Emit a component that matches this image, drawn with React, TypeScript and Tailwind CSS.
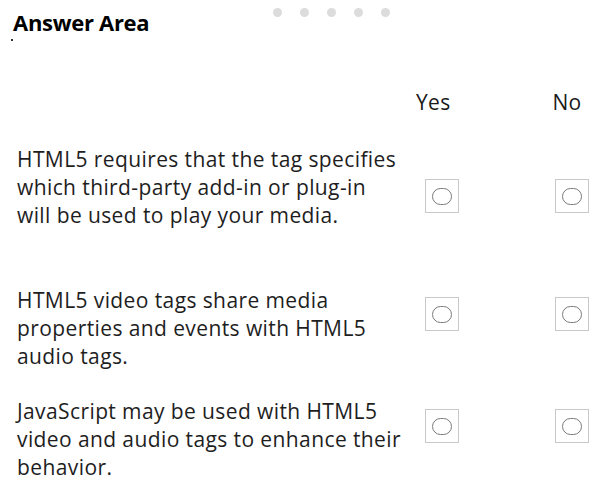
const rows = [
  {
    lines: [
      "HTML5 requires that the tag specifies",
      "which third-party add-in or plug-in",
      "will be used to play your media.",
    ],
    top: "mt-[29px]",
    box: "mt-[34px]",
  },
  {
    lines: [
      "HTML5 video tags share media",
      "properties and events with HTML5",
      "audio tags.",
    ],
    top: "mt-[57px]",
    box: "mt-[11px]",
  },
  {
    lines: [
      "JavaScript may be used with HTML5",
      "video and audio tags to enhance their",
      "behavior.",
    ],
    top: "mt-[27px]",
    box: "mt-[12px]",
  },
];

function RadioBox() {
  return (
    <div className="w-[34px] h-[34px] border border-[#c9c9c9] bg-white flex items-center justify-center">
      <div className="w-[20px] h-[17px] rounded-full border-[1.5px] border-[#7a7a7a]" />
    </div>
  );
}

export default function App() {
  return (
    <div className="w-[603px] h-[501px] bg-white text-[#1a1a1a] font-['Open_Sans',sans-serif] overflow-hidden">
      {/* Header */}
      <div className="flex items-start pt-[7px]">
        <h1 className="w-[273px] pl-[13px] mt-[1px] text-[22px] leading-[28px] font-bold text-black tracking-[-0.3px]">
          Answer Area
        </h1>
        <div className="mt-[1px] flex gap-[18px]">
          {[0, 1, 2, 3, 4].map((i) => (
            <div key={i} className="w-[9px] h-[9px] rounded-full bg-[#dcdcdc]" />
          ))}
        </div>
      </div>
      <div className="ml-[11px] mt-[3px] w-[2px] h-[2px] bg-[#333]" />

      {/* Yes / No */}
      <div className="flex mt-[47px] text-[21px] leading-[28px] tracking-[0.3px]">
        <span className="ml-[416px]">Yes</span>
        <span className="ml-[102px]">No</span>
      </div>

      {rows.map((row, i) => (
        <div key={i} className={`flex items-start ${row.top}`}>
          <p className="w-[425px] pl-[17px] text-[21px] leading-[28px] tracking-[0.4px] text-[#1e1e1e]">
            {row.lines.map((l, j) => (
              <span key={j} className="block whitespace-nowrap">
                {l}
              </span>
            ))}
          </p>
          <div className={`flex ${row.box}`}>
            <RadioBox />
            <div className="ml-[96px]">
              <RadioBox />
            </div>
          </div>
        </div>
      ))}
    </div>
  );
}
